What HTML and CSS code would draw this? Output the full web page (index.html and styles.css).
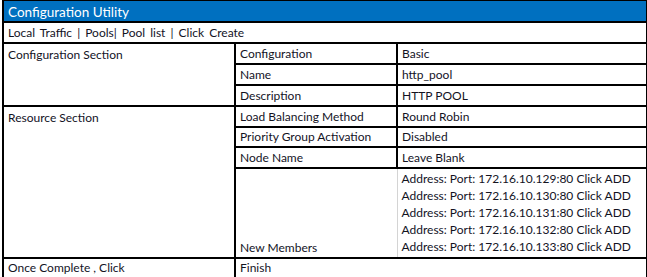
FILE: index.html
```html
<!DOCTYPE html>
<html lang="en">
<head>
  <meta charset="UTF-8" />
  <title>Configuration Utility</title>
  <link rel="stylesheet" href="styles.css">
</head>
<body>

<table class="sheet">
  <colgroup>
    <col class="col-section">
    <col class="col-field">
    <col class="col-value">
  </colgroup>
  <tr class="title-row">
    <td colspan="3">Configuration Utility</td>
  </tr>
  <tr>
    <td colspan="3" class="crumbs">Local Traffic | Pools| Pool list | Click Create</td>
  </tr>
  <tr>
    <td rowspan="3" class="section">Configuration Section</td>
    <td>Configuration</td>
    <td>Basic</td>
  </tr>
  <tr>
    <td>Name</td>
    <td>http_pool</td>
  </tr>
  <tr>
    <td>Description</td>
    <td>HTTP POOL</td>
  </tr>
  <tr>
    <td rowspan="4" class="section">Resource Section</td>
    <td>Load Balancing Method</td>
    <td>Round Robin</td>
  </tr>
  <tr class="short-row">
    <td>Priority Group Activation</td>
    <td>Disabled</td>
  </tr>
  <tr>
    <td>Node Name</td>
    <td>Leave Blank</td>
  </tr>
  <tr class="members-row">
    <td class="soft-right">New Members</td>
    <td class="soft-left members">
      <div>Address: Port: 172.16.10.129:80 Click ADD</div>
      <div>Address: Port: 172.16.10.130:80 Click ADD</div>
      <div>Address: Port: 172.16.10.131:80 Click ADD</div>
      <div>Address: Port: 172.16.10.132:80 Click ADD</div>
      <div>Address: Port: 172.16.10.133:80 Click ADD</div>
    </td>
  </tr>
  <tr class="last-row">
    <td>Once Complete , Click</td>
    <td colspan="2">Finish</td>
  </tr>
</table>

</body>
</html>
```

FILE: styles.css
```css
* {
  margin: 0;
  padding: 0;
  box-sizing: border-box;
}

html, body {
  background: #fff;
  font-family: 'Lato', 'Open Sans', sans-serif;
  font-size: 12px;
  color: #13131f;
}

.sheet {
  margin: 0 0 0 2px;
  width: 644px;
  border-collapse: collapse;
  table-layout: fixed;
}

.col-section { width: 232px; }
.col-field { width: 162px; }
.col-value { width: 250px; }

.sheet td {
  border: 2px solid #000;
  height: 21px;
  padding: 0 3px 1px 4px;
  line-height: 16px;
  vertical-align: bottom;
  white-space: nowrap;
  overflow: hidden;
}

.title-row td {
  background: #0070c0;
  color: #fff;
  font-size: 13.5px;
  border-top-width: 1px;
}

.sheet td.crumbs {
  word-spacing: 2px;
}

.sheet td.section {
  vertical-align: top;
  padding-top: 3px;
}

.short-row td {
  height: 20px;
}

.members-row td {
  height: 87px;
}

.sheet td.soft-right {
  border-right: 1px solid #d4d4d4;
}

.sheet td.soft-left {
  border-left: 1px solid #d4d4d4;
}

.sheet td.members {
  vertical-align: top;
  padding-top: 1px;
  line-height: 17.2px;
}

.last-row td {
  border-bottom-width: 3px;
}
```
